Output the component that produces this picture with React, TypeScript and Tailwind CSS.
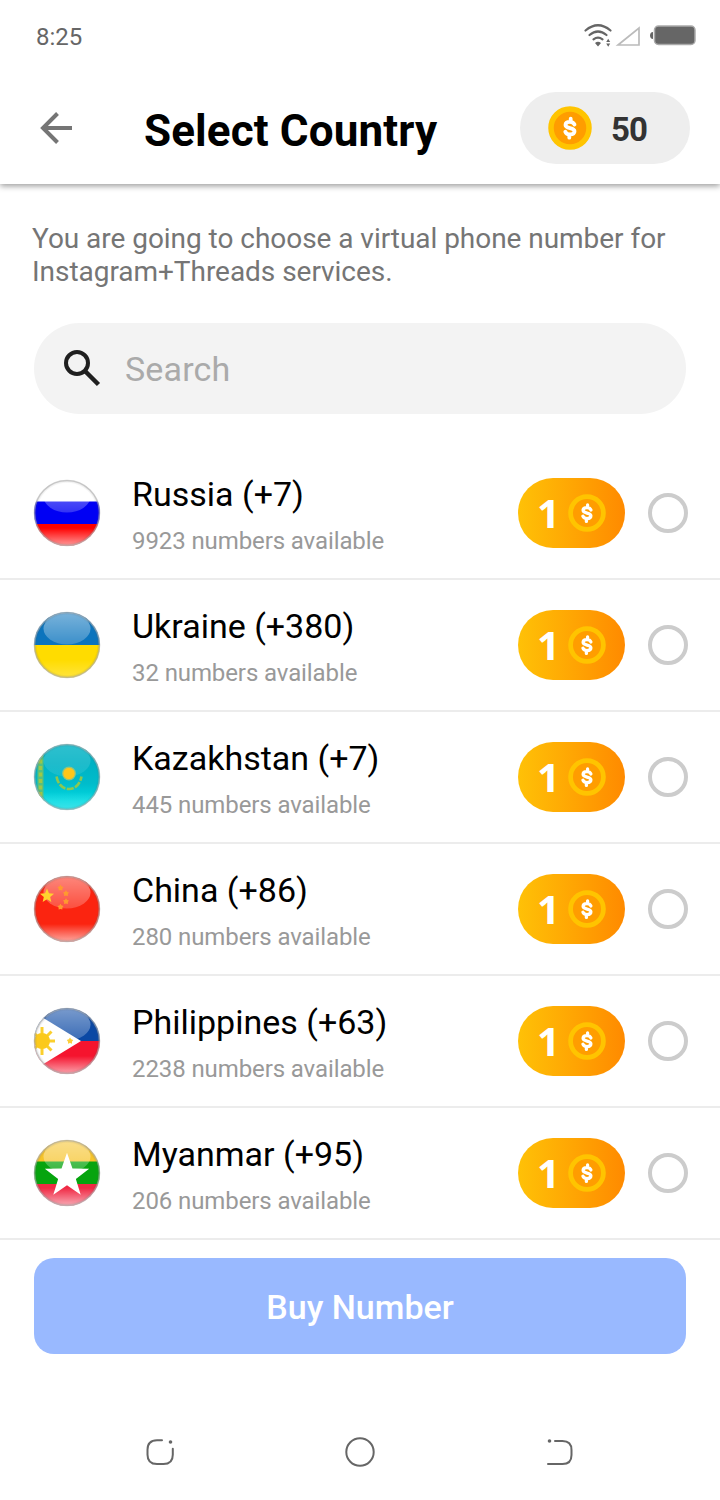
import React, { useState } from 'react';

type FlagCode = 'ru' | 'ua' | 'kz' | 'cn' | 'ph' | 'mm';

const countries: { code: FlagCode; name: string; prefix: string; available: number; price: number }[] = [
  { code: 'ru', name: 'Russia', prefix: '+7', available: 9923, price: 1 },
  { code: 'ua', name: 'Ukraine', prefix: '+380', available: 32, price: 1 },
  { code: 'kz', name: 'Kazakhstan', prefix: '+7', available: 445, price: 1 },
  { code: 'cn', name: 'China', prefix: '+86', available: 280, price: 1 },
  { code: 'ph', name: 'Philippines', prefix: '+63', available: 2238, price: 1 },
  { code: 'mm', name: 'Myanmar', prefix: '+95', available: 206, price: 1 },
];

function starPoints(cx: number, cy: number, r: number, inner = 0.4) {
  return Array.from({ length: 10 }, (_, i) => {
    const radius = i % 2 ? r * inner : r;
    const a = (Math.PI / 5) * i - Math.PI / 2;
    return `${(cx + radius * Math.cos(a)).toFixed(2)},${(cy + radius * Math.sin(a)).toFixed(2)}`;
  }).join(' ');
}

function FlagField({ code }: { code: FlagCode }) {
  switch (code) {
    case 'ru':
      return (
        <>
          <rect width="68" height="23" fill="#ffffff" />
          <rect y="22.5" width="68" height="22.5" fill="#0000f4" />
          <rect y="45" width="68" height="23" fill="#ff0000" />
        </>
      );
    case 'ua':
      return (
        <>
          <rect width="68" height="34" fill="#0b74bd" />
          <rect y="34" width="68" height="34" fill="#ffdc00" />
        </>
      );
    case 'kz':
      return (
        <>
          <linearGradient id="kz-field" x1="0" y1="0" x2="0" y2="1">
            <stop offset="0.3" stopColor="#00b2c4" />
            <stop offset="0.6" stopColor="#00bccb" />
            <stop offset="0.85" stopColor="#00dae2" />
          </linearGradient>
          <rect width="68" height="68" fill="url(#kz-field)" />
          <path d="M7.500 10v48" stroke="#58c07c" strokeWidth="6" />
          <path d="M7.500 10v48" stroke="#9cc848" strokeWidth="3.500" strokeDasharray="4 2.500" />
        </>
      );
    case 'cn':
      return <rect width="68" height="68" fill="#fb2410" />;
    case 'ph':
      return (
        <>
          <rect width="68" height="34" fill="#0a48a4" />
          <rect y="34" width="68" height="34" fill="#f5142e" />
          <path d="M-6 1 48 34-6 67z" fill="#ffffff" />
        </>
      );
    case 'mm':
      return (
        <>
          <rect width="68" height="23" fill="#f6c32a" />
          <rect y="22.5" width="68" height="22.5" fill="#06a40e" />
          <rect y="45" width="68" height="23" fill="#f02a45" />
        </>
      );
  }
}

// Emblems sit above the gloss so that they keep their full colour
function FlagEmblem({ code }: { code: FlagCode }) {
  switch (code) {
    case 'kz':
      return (
        <>
          <circle cx="36" cy="30.500" r="6.300" fill="#ffc61a" stroke="#8fc580" strokeWidth="1.200" />
          <path
            d="M23.500 33.500c1.500 8 6.500 12.500 12.500 12.500S47 41.500 48.500 33.500"
            fill="none"
            stroke="#8cc850"
            strokeWidth="2.600"
            strokeDasharray="7 1.500"
          />
        </>
      );
    case 'cn':
      return (
        <>
          <polygon points={starPoints(14, 21, 7.4, 0.45)} fill="#ffd22e" />
          <polygon points={starPoints(27.5, 13, 3.2, 0.6)} fill="#ff9a2e" />
          <polygon points={starPoints(33, 18.5, 3.2, 0.6)} fill="#ff9a2e" />
          <polygon points={starPoints(33, 26.5, 3.2, 0.6)} fill="#ff9a2e" />
          <polygon points={starPoints(27.5, 32, 3.2, 0.6)} fill="#ff9a2e" />
        </>
      );
    case 'ph':
      return (
        <>
          <path
            d="M9 20v28M-5 34h27M-0.500 24.500l19 19M-0.500 43.500l19-19"
            stroke="#fbcf2c"
            strokeWidth="3"
          />
          <circle cx="9" cy="34" r="8" fill="#fbc91c" />
          <polygon points={starPoints(37, 34, 3.4, 0.6)} fill="#fbcf3c" />
        </>
      );
    case 'mm':
      return <polygon points={starPoints(34, 37, 23.3)} fill="#ffffff" />;
    default:
      return null;
  }
}

function Flag({ code }: { code: FlagCode }) {
  return (
    <svg className="h-[68px] w-[68px] shrink-0" viewBox="0 0 68 68" aria-hidden="true">
      <defs>
        <clipPath id={`clip-${code}`}>
          <circle cx="34" cy="34" r="33" />
        </clipPath>
        <linearGradient id={`gloss-${code}`} x1="0" y1="0" x2="0" y2="1">
          <stop offset="0" stopColor="#fff" stopOpacity="0.45" />
          <stop offset="1" stopColor="#fff" stopOpacity="0.2" />
        </linearGradient>
        <linearGradient id={`glow-${code}`} x1="0" y1="0" x2="0" y2="1">
          <stop offset="0.72" stopColor="#fff" stopOpacity="0" />
          <stop offset="1" stopColor="#fff" stopOpacity="0.65" />
        </linearGradient>
        <radialGradient id={`edge-${code}`}>
          <stop offset="0.9" stopColor="#555" stopOpacity="0" />
          <stop offset="1" stopColor="#555" stopOpacity="0.2" />
        </radialGradient>
      </defs>
      <g clipPath={`url(#clip-${code})`}>
        <FlagField code={code} />
        <rect
          width="68"
          height="68"
          fill={`url(#glow-${code})`}
          opacity={code === 'ua' || code === 'kz' ? 0.4 : 1}
        />
        <ellipse
          cx="34"
          cy="17.500"
          rx="23.500"
          ry="16"
          fill={`url(#gloss-${code})`}
          opacity={code === 'kz' ? 0.4 : 1}
        />
        <FlagEmblem code={code} />
        <circle cx="34" cy="34" r="33" fill={`url(#edge-${code})`} />
      </g>
      <circle cx="34" cy="34" r="32.500" fill="none" stroke="#b0b0b0" strokeOpacity="0.600" strokeWidth="1.600" />
    </svg>
  );
}

function Coin({ className }: { className: string }) {
  return (
    <svg className={className} viewBox="0 0 44 44" fill="none" aria-hidden="true">
      <circle cx="22" cy="22" r="19" fill="#ff9d00" stroke="#ffc400" strokeWidth="5.500" />
      <path
        d="M26.500 18.500c-.7-1.700-2.300-2.700-4.500-2.700-2.600 0-4.500 1.200-4.500 3.100 0 4.200 9 2.100 9 6.300 0 2-1.900 3.200-4.500 3.200-2.400 0-4-1-4.700-2.700M22.700 12.700v3M21.300 28.700v3"
        stroke="#fff"
        strokeWidth="3.800"
        strokeLinecap="round"
      />
    </svg>
  );
}

function StatusBar() {
  return (
    <div className="relative z-10 flex h-[72px] items-center justify-between bg-white pr-6 pl-9 text-[#666]">
      <span className="mt-[2px] text-2xl">8:25</span>
      <svg className="h-7 w-[114px]" viewBox="0 0 114 28" fill="none" aria-hidden="true">
        <g stroke="#666" strokeWidth="2.200" strokeLinecap="round">
          <path d="M3.500 8.500q12.500-10.500 25 0" />
          <path d="M7.500 13q8.500-7 17 0" />
          <path d="M11.500 17.300q4.500-3.500 9 0" />
        </g>
        <path d="M13 21q3-2.500 6 0l-3 3.500zM24.200 20l2-3.300 2 3.300zM24.200 21.500l2 3.300 2-3.300z" fill="#666" />
        <path d="M36 23 57 6v17z" stroke="#bbb" strokeWidth="1.700" />
        <path d="M71 10c-4 0-4 7 0 7z" fill="#666" />
        <rect x="72.500" y="4" width="40.500" height="18.500" rx="4" fill="#666" stroke="#aaa" strokeWidth="1.500" />
      </svg>
    </div>
  );
}

function Header({ balance }: { balance: number }) {
  return (
    <header className="flex h-28 items-center pr-[30px] pl-10 shadow-[0_2px_6px_rgba(0,0,0,0.4)]">
      <svg className="h-8 w-8" viewBox="0 0 32 32" fill="none" stroke="#757575" strokeWidth="4" aria-hidden="true">
        <path d="M32 16H4M17.500 1.500 3 16l14.500 14.500" />
      </svg>
      <h1 className="mt-[5px] ml-[72px] flex-1 text-[44px] leading-none font-bold tracking-[0.12px] whitespace-nowrap text-black">
        Select Country
      </h1>
      <div className="flex h-[72px] w-[170px] items-center rounded-full bg-[#eee] pl-7">
        <Coin className="h-11 w-11" />
        <span className="mt-[2px] ml-[19px] text-[33px] leading-none font-bold tracking-[-1px] text-[#333]">
          {balance}
        </span>
      </div>
    </header>
  );
}

function NavBar() {
  return (
    <svg className="mt-[78px] h-10 w-full" viewBox="0 0 720 40" fill="none" stroke="#666" strokeWidth="2" aria-hidden="true">
      <path d="M162 8.300h-5c-6.500 0-9.500 3.500-9.500 9.500v5c0 6.500 3 9.300 9.500 9.300h6.500c6.500 0 9.300-3 9.300-9.300v-6" strokeLinecap="round" />
      <circle cx="170.500" cy="10" r="1.800" fill="#666" stroke="none" />
      <circle cx="360" cy="20" r="13.700" />
      <path d="M555 9h7.500c6.500 0 9 3.500 9 9v5c0 6-3 9-9 9H548" strokeLinecap="round" />
      <circle cx="549.500" cy="9" r="1.800" fill="#666" stroke="none" />
    </svg>
  );
}

export default function App() {
  const [query, setQuery] = useState('');
  const [selected, setSelected] = useState<FlagCode | null>(null);

  const visible = countries.filter((c) => c.name.toLowerCase().includes(query.toLowerCase()));

  return (
    <div className="h-[1500px] w-[720px] overflow-hidden bg-white font-[Roboto,sans-serif]">
      <StatusBar />
      <Header balance={50} />

      <p className="mt-[38px] px-8 text-[28px] leading-[33px] tracking-[-0.04px] text-[#757575]">
        You are going to choose a virtual phone number for
        <br />
        Instagram+Threads services.
      </p>

      <label className="mx-[34px] mt-[35px] flex h-[91px] items-center rounded-full bg-[#f3f3f3] pl-[29px]">
        <svg className="h-10 w-10" viewBox="0 0 40 40" fill="none" stroke="#1f1f1f" strokeWidth="4" aria-hidden="true">
          <circle cx="14" cy="14" r="11" />
          <path d="m22 22 13.500 13.500" strokeWidth="4.500" />
        </svg>
        <input
          value={query}
          onChange={(e) => setQuery(e.target.value)}
          placeholder="Search"
          className="mt-[2px] ml-[22px] w-[500px] bg-transparent text-[34px] tracking-[0.15px] outline-none placeholder:text-[#aaa]"
        />
      </label>

      <ul className="mt-[34px]">
        {visible.map((c) => (
          <li
            key={c.code}
            onClick={() => setSelected(c.code)}
            className="flex h-[132px] items-center border-b-2 border-[#ececec] pr-8 pl-[33px]"
          >
            <Flag code={c.code} />
            <div className="mt-2 ml-[31px] flex-1">
              <div className="text-[34px] leading-[46px] text-black">
                {c.name} ({c.prefix})
              </div>
              <div className="mt-[2px] text-2xl leading-[44px] tracking-[-0.1px] text-[#999]">
                {c.available} numbers available
              </div>
            </div>
            <div className="flex h-[70px] w-[107px] items-center rounded-full bg-linear-to-r from-[#ffc107] to-[#ff8a00] pl-[19px]">
              <span className="w-[31px] font-['Open_Sans',sans-serif] text-[40px] leading-none font-bold text-white">
                {c.price}
              </span>
              <Coin className="h-[38px] w-[38px]" />
            </div>
            <div
              className={`ml-[23px] h-10 w-10 rounded-full border-4 ${
                selected === c.code ? 'border-[#ff8a00]' : 'border-[#ccc]'
              }`}
            />
          </li>
        ))}
      </ul>

      <div className="mt-[18px] px-[34px]">
        <button
          disabled={!selected}
          className="h-24 w-full rounded-[20px] bg-[#3377ff] pt-[2px] text-[34px] font-medium text-white disabled:bg-[#99b9ff]"
        >
          Buy Number
        </button>
      </div>

      <NavBar />
    </div>
  );
}
